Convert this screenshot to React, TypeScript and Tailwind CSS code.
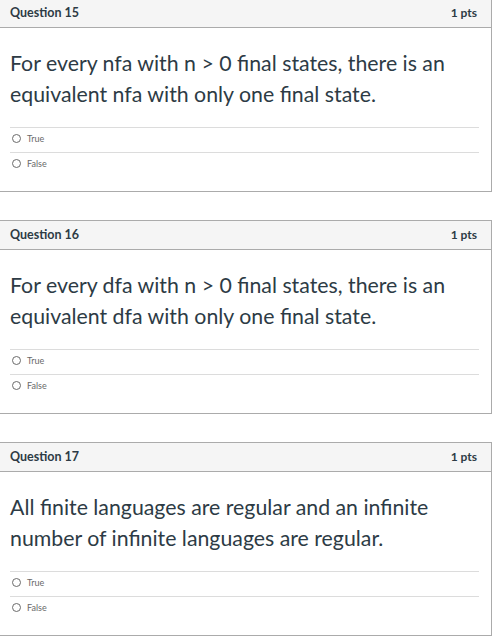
const questions = [
  {
    n: 15,
    text: 'For every nfa with n > 0 final states, there is an equivalent nfa with only one final state.',
  },
  {
    n: 16,
    text: 'For every dfa with n > 0 final states, there is an equivalent dfa with only one final state.',
  },
  {
    n: 17,
    text: 'All finite languages are regular and an infinite number of infinite languages are regular.',
  },
]

function Answer({ label }: { label: string }) {
  return (
    <div className="flex items-center h-[25px] pb-[3px] border-t border-[#dcdcdc] pl-[2px]">
      <span className="w-[9px] h-[9px] rounded-full border border-[#6b6b6b] bg-white" />
      <span className="ml-[6px] text-[9px] text-[#6a6a6a] leading-none">{label}</span>
    </div>
  )
}

function QuestionCard({ n, text }: { n: number; text: string }) {
  return (
    <div className="w-[493px] border border-[#ababab] bg-white">
      {/* header */}
      <div className="h-[29px] flex items-center justify-between pl-[10px] pr-[14px] bg-[#f5f5f5] border-b border-[#ababab]">
        <span className="text-[12.5px] font-bold text-[#2d3b45]">Question {n}</span>
        <span className="text-[12px] font-bold text-[#2d3b45]">1 pts</span>
      </div>

      {/* body */}
      <div className="pt-5 pb-[14px] pl-[10px] pr-[12px]">
        <p className="text-[21.3px] leading-[31px] text-[#2d3b45] pr-4">{text}</p>
        <div className="mt-[17px]">
          <Answer label="True" />
          <Answer label="False" />
        </div>
      </div>
    </div>
  )
}

export default function App() {
  return (
    <div
      className="w-[494px] h-[642px] overflow-hidden bg-white"
      style={{ fontFamily: 'Lato, "Noto Sans", sans-serif' }}
    >
      <div className="-mt-[2px] -ml-px flex flex-col gap-7">
        {questions.map((q) => (
          <QuestionCard key={q.n} n={q.n} text={q.text} />
        ))}
      </div>
    </div>
  )
}
